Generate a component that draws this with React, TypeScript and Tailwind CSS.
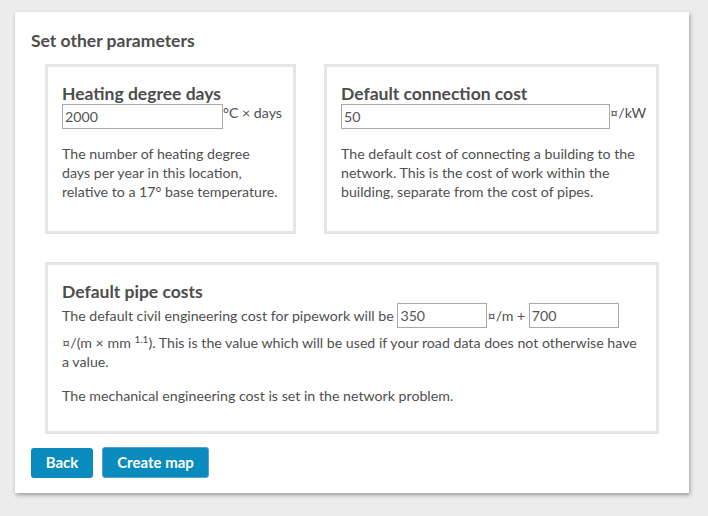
import React from "react";

const font = { fontFamily: "Lato, 'Liberation Sans', sans-serif" };

function Input({ value, w }: { value: string; w: string }) {
  return (
    <input
      defaultValue={value}
      className={`${w} h-[25px] shrink-0 border border-[#a9a9a9] px-[2px] text-[14.2px] text-[#555] outline-none bg-white`}
    />
  );
}

export default function App() {
  return (
    <div className="min-h-[516px] bg-[#ececec] pt-[12px] pl-[15px]" style={font}>
      <div className="w-[674px] h-[481px] bg-white shadow-[1px_2px_4px_rgba(0,0,0,0.35)] pt-[19px] px-[16px] text-[#4f4f4f]">
        <h2 className="text-[17.5px] font-bold leading-[20px] text-[#4d4d4d]">Set other parameters</h2>
        <div className="mx-[14px] mt-[13px] flex gap-[28px]">
          <div className="w-[251px] h-[170px] border-[3px] border-[#e6e6e6] px-[14px] pt-[17px]">
            <div className="text-[17.5px] font-bold leading-[20px] text-[#4d4d4d] whitespace-nowrap">Heating degree days</div>
            <div className="flex items-start">
              <Input value="2000" w="w-[161px]" />
              <span className="text-[14.2px] leading-[18px] whitespace-nowrap">°C × days</span>
            </div>
            <p className="mt-[15px] text-[14.2px] leading-[19px] whitespace-nowrap">
              The number of heating degree<br />days per year in this location,<br />relative to a 17° base temperature.
            </p>
          </div>
          <div className="w-[335px] h-[170px] border-[3px] border-[#e6e6e6] px-[14px] pt-[17px]">
            <div className="text-[17.5px] font-bold leading-[20px] text-[#4d4d4d] whitespace-nowrap">Default connection cost</div>
            <div className="flex items-start">
              <Input value="50" w="w-[269px]" />
              <span className="text-[14.2px] leading-[18px] whitespace-nowrap">¤/kW</span>
            </div>
            <p className="mt-[15px] text-[14.2px] leading-[19px] whitespace-nowrap">
              The default cost of connecting a building to the<br />network. This is the cost of work within the<br />building, separate from the cost of pipes.
            </p>
          </div>
        </div>
        <div className="mx-[14px] mt-[28px] w-[614px] h-[172px] border-[3px] border-[#e6e6e6] px-[14px] pt-[17px]">
          <div className="text-[17.5px] font-bold leading-[20px] text-[#4d4d4d]">Default pipe costs</div>
          <div className="text-[14.2px] leading-[19px] mt-[1px]">
            <div className="flex items-center h-[25px] whitespace-nowrap">
              <span>The default civil engineering cost for pipework will be&nbsp;</span>
              <Input value="350" w="w-[90px]" />
              <span>¤/m +&nbsp;</span>
              <Input value="700" w="w-[90px]" />
            </div>
            <div className="mt-[5px] whitespace-nowrap">
              ¤/(m × mm <sup className="text-[10px]">1.1</sup>). This is the value which will be used if your road data does not otherwise have
            </div>
            <div>a value.</div>
            <p className="mt-[15px]">The mechanical engineering cost is set in the network problem.</p>
          </div>
        </div>
        <div className="mt-[13px] flex items-center gap-[9px]">
          <button className="w-[62px] h-[30px] rounded-[3px] bg-[#0a8bbd] text-white text-[15px] font-bold">Back</button>
          <button className="w-[107px] h-[31px] rounded-[3px] bg-[#0a8bbd] border border-[#5b9ee0] text-white text-[15px] font-bold">Create map</button>
        </div>
      </div>
    </div>
  );
}
